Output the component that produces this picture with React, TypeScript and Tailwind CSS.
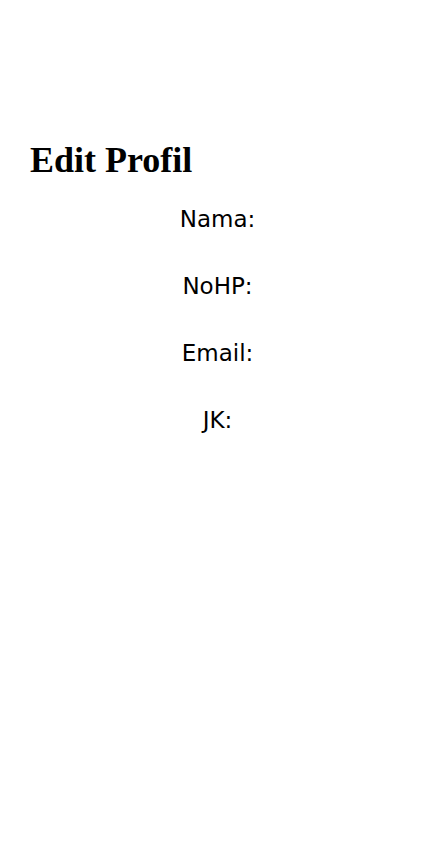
export default function App() {
  const fields = ["Nama:", "NoHP:", "Email:", "JK:"];

  return (
    <div className="min-h-screen bg-white text-black">
      <div className="pt-[136px] px-[30px]">
        <h1 className="text-[36px] leading-[48px] font-bold font-['Liberation_Serif',serif]">
          Edit Profil
        </h1>
      </div>
      <div className="mt-[21px] flex flex-col items-center gap-[39px] font-['DejaVu_Sans',sans-serif] text-[23px] leading-[28px]">
        {fields.map((f) => (
          <div key={f}>{f}</div>
        ))}
      </div>
    </div>
  );
}
